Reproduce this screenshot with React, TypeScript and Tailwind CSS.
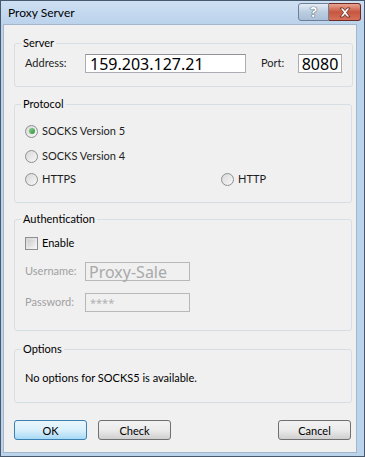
import React from 'react';

const font = { fontFamily: 'Lato, "Noto Sans", sans-serif' };
const boxFont = { fontFamily: '"Noto Sans", "Open Sans", sans-serif' };

function Radio({ checked, label }: { checked?: boolean; label: string }) {
  return (
    <label className="flex items-center gap-[4px] h-[16px]">
      <span className="w-[13px] h-[13px] rounded-full border border-[#8e8f8f] bg-gradient-to-br from-[#d9d9d9] to-[#f7f7f7] flex items-center justify-center">
        {checked && (
          <span className="w-[6px] h-[6px] rounded-full bg-gradient-to-br from-[#8bd38b] to-[#2f8f3f]" />
        )}
      </span>
      <span>{label}</span>
    </label>
  );
}

function Group({ title, children, className }: { title: string; children: React.ReactNode; className?: string }) {
  return (
    <fieldset className={'border border-[#d5dfe5] rounded-[3px] px-[10px] ' + (className || '')}>
      <legend className="ml-[-4px] px-[2px] leading-[16px] text-black">{title}</legend>
      {children}
    </fieldset>
  );
}

export default function App() {
  return (
    <div style={font} className="w-[365px] h-[457px] flex flex-col bg-[#bcd3ec] border border-[#49596d] text-[11px] text-[#1e1e1e] overflow-hidden">
      {/* title bar */}
      <div className="h-[23px] shrink-0 flex items-start bg-gradient-to-b from-[#cddff2] to-[#bcd3ec]">
        <div className="pl-[7px] pt-[4px] leading-[16px] text-[12px] text-black">Proxy Server</div>
        <div className="ml-auto mr-[3px] mt-[2px] flex">
          <div className="w-[31px] h-[18px] rounded-l-[3px] border border-[#6c7f96] bg-gradient-to-b from-[#e4ecf5] via-[#bccde1] to-[#aabfd8] flex items-center justify-center">
            <span style={boxFont} className="text-white font-bold text-[14px] leading-none [text-shadow:0_0_1px_#2b3a4d,0_0_1px_#2b3a4d]">?</span>
          </div>
          <div className="w-[32px] h-[18px] rounded-r-[3px] border border-[#6e2a22] border-l-0 bg-gradient-to-b from-[#e8a493] via-[#c7563f] to-[#d6705a] flex items-center justify-center">
            <svg width="14" height="11" viewBox="0 0 14 11">
              <path d="M2 1 L5 1 L7 3.5 L9 1 L12 1 L8.5 5.5 L12 10 L9 10 L7 7.5 L5 10 L2 10 L5.5 5.5 Z" fill="#fff" stroke="#5a1f18" strokeWidth="0.8" />
            </svg>
          </div>
        </div>
      </div>

      {/* client */}
      <div className="flex-1 flex flex-col bg-[#f0f0f0] ml-[2px] mr-[7px] mb-[3px] border border-[#a3b6cc] pl-[10px] pr-[4px] pt-[10px]">
        <Group title="Server" className="pb-[13px]">
          <div className="flex items-center pt-[3px]">
            <span className="w-[60px]">Address:</span>
            <div style={boxFont} className="w-[161px] h-[19px] border border-[#abadb3] border-t-[#8f9297] bg-white flex items-center pl-[4px] text-[16px] text-black leading-none">159.203.127.21</div>
            <span className="ml-[15px] w-[37px]">Port:</span>
            <div style={boxFont} className="w-[44px] h-[19px] border border-[#abadb3] border-t-[#8f9297] bg-white flex items-center justify-center text-[16px] text-black leading-none">8080</div>
          </div>
        </Group>

        <Group title="Protocol" className="mt-[9px] pb-[15px]">
          <div className="pt-[11px] flex flex-col">
            <Radio checked label="SOCKS Version 5" />
            <div className="mt-[9px]"><Radio label="SOCKS Version 4" /></div>
            <div className="mt-[7px] flex">
              <div className="w-[196px]"><Radio label="HTTPS" /></div>
              <Radio label="HTTP" />
            </div>
          </div>
        </Group>

        <Group title="Authentication" className="mt-[8px] pb-[18px]">
          <div className="pt-[8px]">
            <label className="flex items-center gap-[4px] h-[16px]">
              <span className="w-[13px] h-[13px] border border-[#8e8f8f] bg-gradient-to-br from-[#d4d4d4] to-[#f7f7f7] p-[2px]">
                <span className="block w-full h-full bg-gradient-to-br from-[#cfcfcf] to-[#eeeeee]" />
              </span>
              <span className="text-black">Enable</span>
            </label>
            <div className="mt-[11px] flex items-center text-[#a0a0a0]">
              <span className="w-[60px]">Username:</span>
              <div style={boxFont} className="w-[105px] h-[19px] border border-[#b8b8b8] bg-[#f0f0f0] flex items-center pl-[3px] text-[16px] text-[#a9a9a9] leading-none">Proxy-Sale</div>
            </div>
            <div className="mt-[12px] flex items-center text-[#a0a0a0]">
              <span className="w-[60px]">Password:</span>
              <div style={boxFont} className="w-[105px] h-[19px] border border-[#b8b8b8] bg-[#f0f0f0] flex items-center pl-[4px] text-[11px] text-[#b0b0b0] leading-none">****</div>
            </div>
          </div>
        </Group>

        <Group title="Options" className="mt-[10px] pb-[16px]">
          <div className="pt-[13px] leading-[16px] text-black">No options for SOCKS5 is available.</div>
        </Group>

        <div className="mt-[17px] flex">
          <button className="w-[73px] h-[20px] rounded-[3px] border border-[#3c7fb1] bg-gradient-to-b from-[#eaf6fd] via-[#d9f0fc] to-[#a7d9f5] text-black leading-none">OK</button>
          <button className="ml-[11px] w-[73px] h-[20px] rounded-[3px] border border-[#707070] bg-gradient-to-b from-[#f2f2f2] via-[#ebebeb] to-[#cfcfcf] text-black leading-none">Check</button>
          <button className="ml-auto mr-[1px] w-[73px] h-[20px] rounded-[3px] border border-[#707070] bg-gradient-to-b from-[#f2f2f2] via-[#ebebeb] to-[#cfcfcf] text-black leading-none">Cancel</button>
        </div>
      </div>
    </div>
  );
}
